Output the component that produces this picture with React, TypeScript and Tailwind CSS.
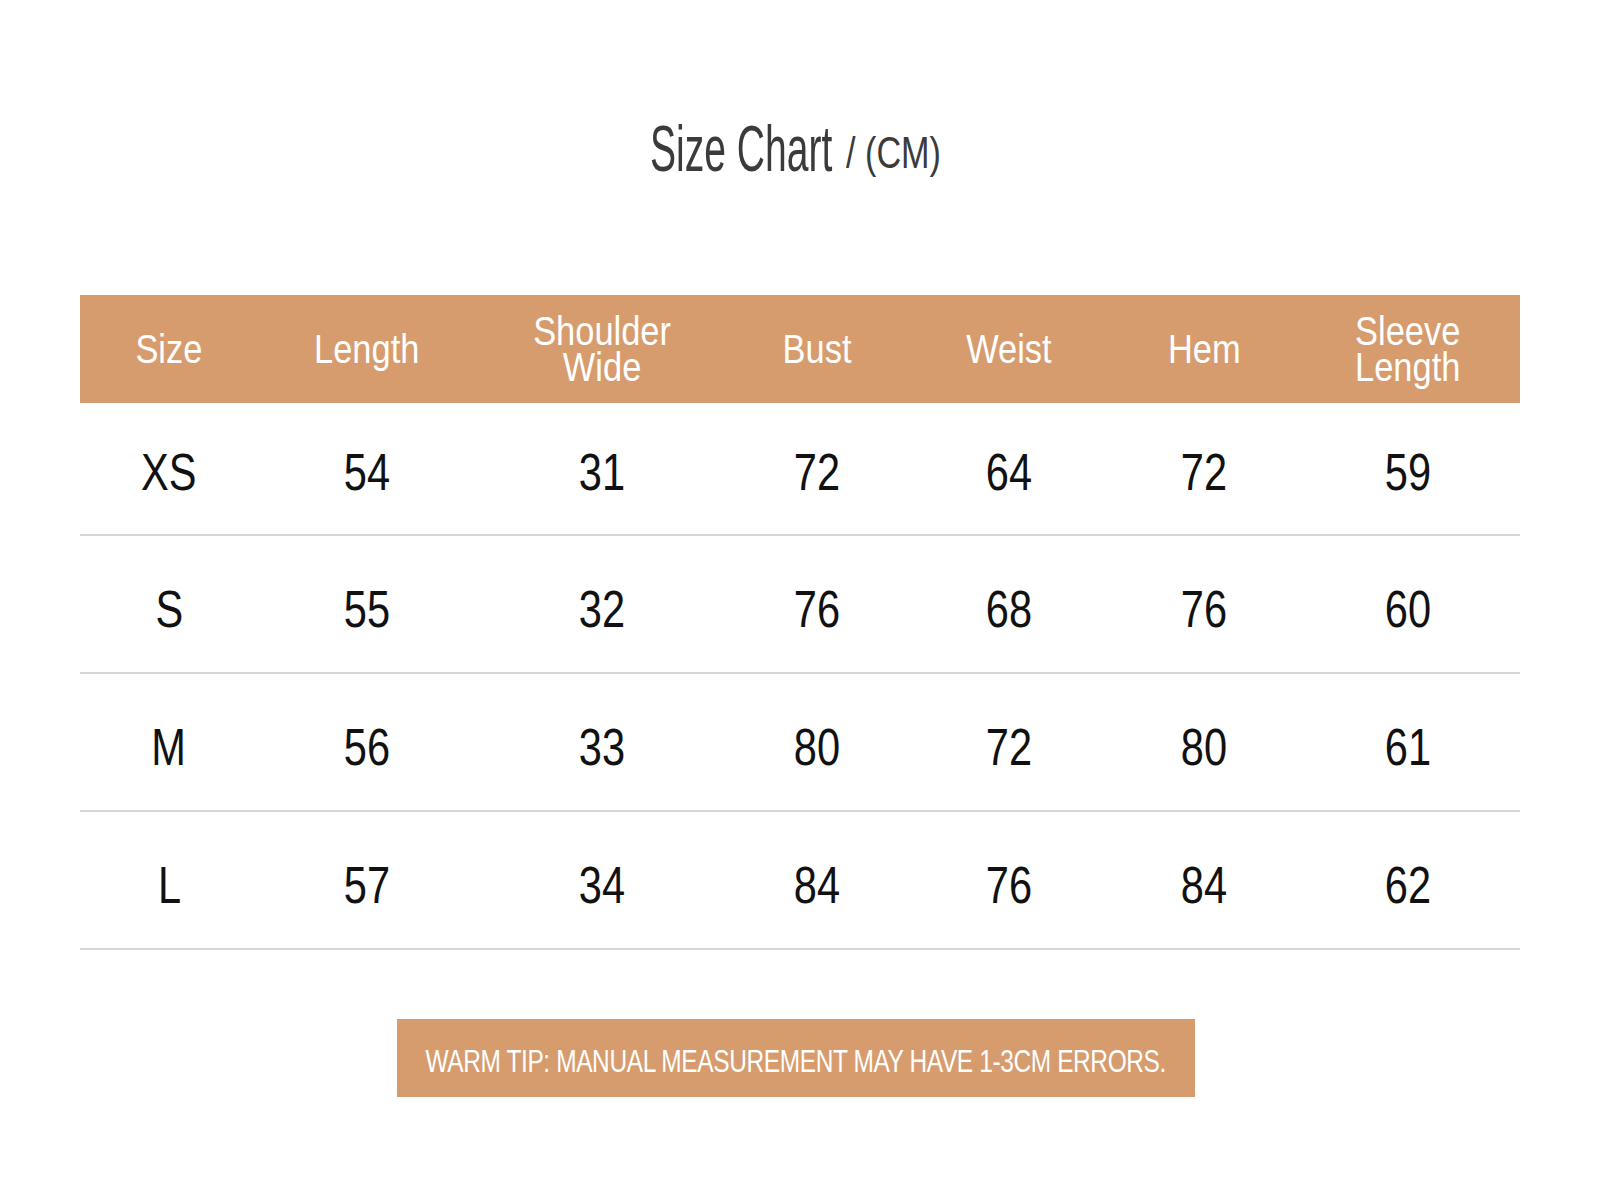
import React from 'react'

const headers = ['Size', 'Length', 'Shoulder\nWide', 'Bust', 'Weist', 'Hem', 'Sleeve\nLength']

const rows = [
    ['XS', '54', '31', '72', '64', '72', '59'],
    ['S', '55', '32', '76', '68', '76', '60'],
    ['M', '56', '33', '80', '72', '80', '61'],
    ['L', '57', '34', '84', '76', '84', '62'],
]

const cols = 'grid grid-cols-[178px_218px_252px_178px_206px_184px_224px]'

const App: React.FC = () => {
    return (
        <div className="min-h-[1200px] w-[1600px] bg-white flex flex-col items-center font-['Liberation_Sans',Arial,sans-serif]">
            {/* title, squeezed to match the condensed face */}
            <h1 className="mt-[101px] h-[80px] flex items-end text-[#3b3b3b] mr-[8px]">
                <span className="inline-block w-[182px] text-[64px] leading-none">
                    <span className="inline-block scale-x-[0.61] origin-left whitespace-nowrap">Size Chart</span>
                </span>
                <span className="inline-block w-[110px] pl-[14px] text-[45px] leading-none mb-[6px]">
                    <span className="inline-block scale-x-[0.76] origin-left whitespace-nowrap">/ (CM)</span>
                </span>
            </h1>

            <div className="mt-[114px] w-[1440px]">
                <div className={`${cols} h-[108px] bg-[#d69c6d] text-white`}>
                    {headers.map((h) => (
                        <div key={h} className="flex items-center justify-center text-center text-[41px] leading-[36px]">
                            <span className="inline-block scale-x-[0.84] whitespace-pre-line">{h}</span>
                        </div>
                    ))}
                </div>

                {rows.map((row, i) => (
                    <div
                        key={row[0]}
                        className={`${cols} border-b-2 border-[#d6d6d6] text-[#111] ${i === 0 ? 'h-[133px] pt-[6px]' : 'h-[138px] pt-[10px]'}`}
                    >
                        {row.map((cell, j) => (
                            <div key={j} className="flex items-center justify-center text-[52px] leading-none">
                                <span className="inline-block scale-x-[0.8]">{cell}</span>
                            </div>
                        ))}
                    </div>
                ))}
            </div>

            <div className="mt-[69px] mr-[8px] w-[798px] h-[78px] bg-[#d69c6d] flex items-center justify-center pt-[6px]">
                <p className="shrink-0 text-white text-[31px] leading-none tracking-[-0.5px] whitespace-nowrap scale-x-[0.79]">
                    WARM TIP: MANUAL MEASUREMENT MAY HAVE 1-3CM ERRORS.
                </p>
            </div>
        </div>
    )
}

export default App
